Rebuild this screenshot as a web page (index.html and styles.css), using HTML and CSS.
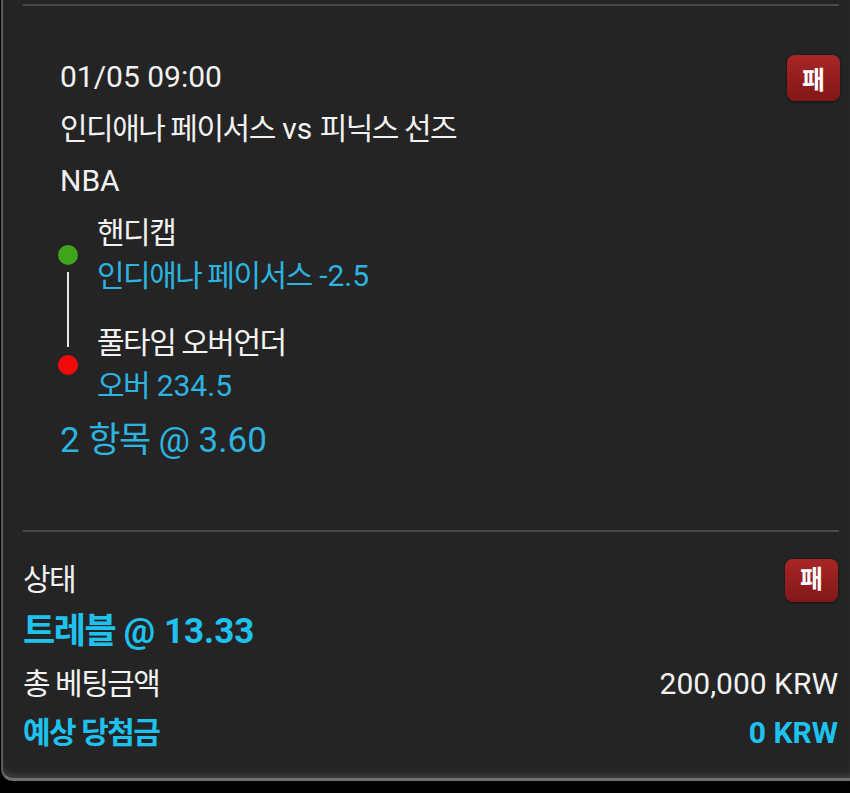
FILE: index.html
```html
<!DOCTYPE html>
<html lang="ko">
<head>
<meta charset="utf-8">
<link rel="stylesheet" href="styles.css">
</head>
<body>
<div class="card">
  <div class="sep sep-top"></div>
  <section class="bet">
    <div class="bet-head">
      <div class="line">01/05 09:00</div>
      <span class="badge">패</span>
    </div>
    <div class="line"><span class="k">인디애나 페이서스</span> vs <span class="k">피닉스 선즈</span></div>
    <div class="line">NBA</div>
    <div class="legs">
      <div class="leg">
        <span class="dot dot-green"></span>
        <div class="leg-title"><span class="k">핸디캡</span></div>
        <div class="leg-pick"><span class="k">인디애나 페이서스</span> -2.5</div>
      </div>
      <div class="leg">
        <span class="dot dot-red"></span>
        <div class="leg-title"><span class="k">풀타임 오버언더</span></div>
        <div class="leg-pick"><span class="k">오버</span> 234.5</div>
      </div>
    </div>
    <div class="total">2 <span class="k">항목</span> @ 3.60</div>
  </section>
  <div class="sep sep-mid"></div>
  <section class="summary">
    <div class="row row-status">
      <span class="k">상태</span>
      <span class="badge badge-sm">패</span>
    </div>
    <div class="row strong big"><span><span class="k">트레블</span> @ 13.33</span></div>
    <div class="row">
      <span class="k">총 베팅금액</span>
      <span>200,000 KRW</span>
    </div>
    <div class="row strong row-last">
      <span class="k">예상 당첨금</span>
      <span>0 KRW</span>
    </div>
  </section>
</div>
</body>
</html>
```
FILE: styles.css
```css
html, body {
  margin: 0;
  padding: 0;
  background: #000;
}
body {
  width: 850px;
  height: 793px;
  overflow: hidden;
  font-family: Roboto, "Noto Sans CJK KR", sans-serif;
  color: #f2f2f2;
  font-size: 30px;
}
.k {
  letter-spacing: -1.5px;
}
.card {
  margin-left: 1px;
  background: #242424;
  border-left: 2px solid #5c5c5c;
  border-bottom: 3px solid #707070;
  border-bottom-left-radius: 12px;
  box-shadow: inset 0 -6px 6px -3px rgba(120,120,120,0.35);
  padding-top: 4px;
  box-sizing: border-box;
  height: 781px;
}
.sep {
  height: 2px;
  background: #4a4a4a;
  margin: 0 11px 0 20px;
}
.bet {
  padding: 45px 10px 0 57px;
  height: 524px;
  box-sizing: border-box;
}
.bet-head {
  display: flex;
  justify-content: space-between;
  align-items: flex-start;
}
.line {
  line-height: 52px;
  height: 52px;
}
.badge {
  display: flex;
  align-items: center;
  justify-content: center;
  width: 53px;
  height: 46px;
  margin-top: 4px;
  border-radius: 8px;
  background: linear-gradient(#a82626, #821717);
  color: #fff;
  font-size: 25px;
  font-weight: 700;
  letter-spacing: 0;
  box-shadow: 0 1px 3px rgba(0,0,0,0.5);
}
.badge-sm {
  height: 43px;
  margin-top: 0;
}
.legs {
  position: relative;
  margin: 4px 0 0 -2px;
  display: flex;
  flex-direction: column;
  gap: 24px;
}
.legs::before {
  content: "";
  position: absolute;
  left: 9px;
  top: 61px;
  width: 2px;
  height: 75px;
  background: #e8e8e8;
}
.leg {
  display: grid;
  grid-template-columns: 20px 1fr;
  column-gap: 19px;
  line-height: 43px;
}
.dot {
  grid-column: 1;
  grid-row: 1 / span 2;
  align-self: center;
  width: 20px;
  height: 20px;
  border-radius: 50%;
  margin-top: 2px;
}
.dot-green { background: #3fa31c; }
.dot-red { background: #f20a0a; }
.leg-title { grid-column: 2; }
.leg-pick { grid-column: 2; color: #2db3e0; }
.total {
  margin-top: 10px;
  line-height: 48px;
  font-size: 35px;
  color: #2db3e0;
}
.summary {
  padding: 22px 12px 0 20px;
}
.row {
  display: flex;
  justify-content: space-between;
  align-items: center;
  height: 52px;
  line-height: 52px;
}
.row-last {
  height: 46px;
  line-height: 46px;
}
.strong {
  color: #1fc2ee;
  font-weight: 700;
}
.big {
  font-size: 35px;
}
```
